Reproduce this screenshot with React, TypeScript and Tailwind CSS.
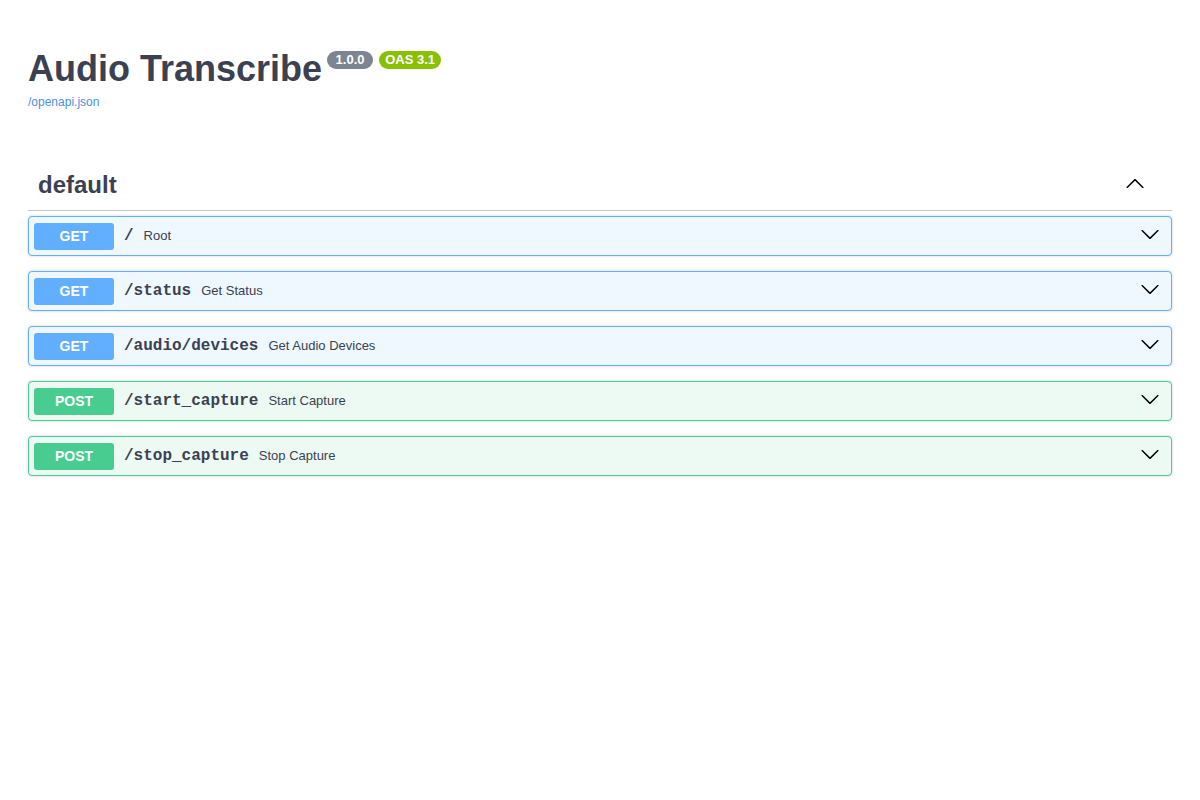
const ops = [
  { method: "GET", path: "/", summary: "Root" },
  { method: "GET", path: "/status", summary: "Get Status" },
  { method: "GET", path: "/audio/devices", summary: "Get Audio Devices" },
  { method: "POST", path: "/start_capture", summary: "Start Capture" },
  { method: "POST", path: "/stop_capture", summary: "Stop Capture" },
];

function Arrow({ up }: { up?: boolean }) {
  return (
    <svg width="20" height="20" viewBox="0 0 20 20" className={up ? "rotate-180" : ""}>
      <path
        d="M17.418 6.109c.272-.268.709-.268.979 0s.271.701 0 .969l-7.908 7.83c-.27.268-.707.268-.979 0l-7.908-7.83c-.27-.268-.27-.701 0-.969.271-.268.709-.268.979 0L10 13.25l7.418-7.141z"
        fill="#000"
      />
    </svg>
  );
}

export default function App() {
  return (
    <div className="min-h-screen bg-white px-[28px] text-[#3b4151]" style={{ fontFamily: '"Liberation Sans", Arial, sans-serif' }}>
      {/* Info */}
      <div className="pt-[48px]">
        <div className="flex items-start">
          <h2 className="text-[36px] font-bold leading-[41px] text-[#3b4151]">Audio Transcribe</h2>
          <span className="ml-[5px] mt-[3px] flex h-[18px] w-[46px] items-center justify-center rounded-full bg-[#7d8492] text-[13px] font-bold text-white">
            1.0.0
          </span>
          <span className="ml-[6px] mt-[3px] flex h-[18px] w-[62px] items-center justify-center rounded-full bg-[#89bf04] text-[13px] font-bold text-white">
            OAS 3.1
          </span>
        </div>
        <a className="mt-[6px] block text-[12px] leading-[14px] text-[#4990e2]">/openapi.json</a>
      </div>

      {/* Tag */}
      <div className="mt-[51px]">
        <div className="mb-[5px] flex h-[51px] items-center justify-between border-b border-[rgba(59,65,81,0.3)] pl-[10px] pr-[20px]">
          <h3 className="text-[24px] font-bold text-[#3b4151]">default</h3>
          <div className="relative -top-[1px] mr-[7px]">
            <Arrow up />
          </div>
        </div>

        <div className="flex flex-col gap-[15px]">
          {ops.map((op) => {
            const get = op.method === "GET";
            return (
              <div
                key={op.path}
                className={
                  "flex h-[40px] items-center rounded-[4px] border p-[5px] shadow-[0_0_3px_rgba(0,0,0,0.19)] " +
                  (get ? "border-[#61affe] bg-[#eff7ff]" : "border-[#49cc90] bg-[#edfaf4]")
                }
              >
                <span
                  className={
                    "flex h-[27px] w-[80px] items-center justify-center rounded-[3px] text-[14px] font-bold text-white " +
                    (get ? "bg-[#61affe]" : "bg-[#49cc90]")
                  }
                >
                  {op.method}
                </span>
                <span
                  className="px-[10px] text-[16px] font-bold text-[#3b4151]"
                  style={{ fontFamily: '"Liberation Mono", "Courier New", monospace' }}
                >
                  {op.path}
                </span>
                <span className="text-[13px] text-[#3b4151]">{op.summary}</span>
                <div className="relative -top-[2px] ml-auto mr-[6px]">
                  <Arrow />
                </div>
              </div>
            );
          })}
        </div>
      </div>
    </div>
  );
}
